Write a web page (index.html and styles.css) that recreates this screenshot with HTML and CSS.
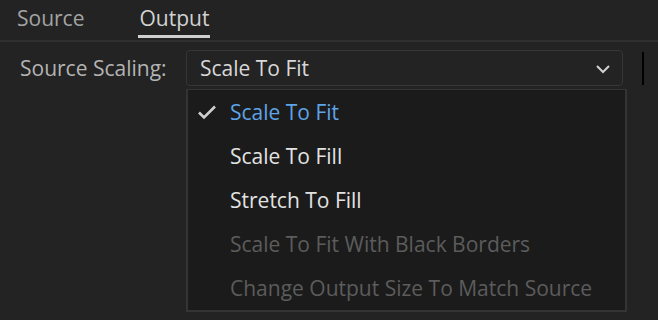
FILE: index.html
```html
<!DOCTYPE html>
<html lang="en">
<head>
  <meta charset="UTF-8">
  <meta name="viewport" content="width=device-width, initial-scale=1.0">
  <title>Output</title>
  <link rel="stylesheet" href="styles.css">
</head>
<body>
  <div class="panel">
    <div class="tab-header">
      <span class="tab-item">Source</span>
      <span class="tab-item active">Output</span>
    </div>
    <div class="field">
      <span class="field-label">Source Scaling:</span>
      <div class="select">
        <span class="select-value">Scale To Fit</span>
        <svg class="chevron" width="16" height="10" viewBox="0 0 16 10">
          <path d="M2 2 L8 8 L14 2" fill="none" stroke="#d0d0d0" stroke-width="2"/>
        </svg>
      </div>
      <span class="divider"></span>
      <ul class="menu">
        <li class="menu-item checked">
          <svg class="check" width="20" height="16" viewBox="0 0 20 16">
            <path d="M2 8.5 L7 13.5 L18 2.5" fill="none" stroke="#cfcfcf" stroke-width="2.6"/>
          </svg>
          Scale To Fit
        </li>
        <li class="menu-item">Scale To Fill</li>
        <li class="menu-item">Stretch To Fill</li>
        <li class="menu-item disabled">Scale To Fit With Black Borders</li>
        <li class="menu-item disabled">Change Output Size To Match Source</li>
      </ul>
    </div>
  </div>
</body>
</html>
```

FILE: styles.css
```css
html, body{
  height: 100%;
}

body{
  margin: 0;
  background: #232323;
  font-family: "Open Sans", Lato, sans-serif;
}

.panel{
  min-height: 320px;
}

.tab-header{
  display: flex;
  gap: 55px;
  height: 42px;
  padding-left: 17px;
  border-bottom: 2px solid #2f2f2f;
  box-sizing: border-box;
  font-size: 21px;
}

.tab-item{
  position: relative;
  line-height: 36px;
  color: #a3a3a3;
}

.tab-item.active{
  color: #d2d2d2;
}

.tab-item.active::after{
  content: '';
  position: absolute;
  left: -1px;
  right: -1px;
  top: 35px;
  height: 3px;
  background: #cfcfcf;
}

.field{
  position: relative;
  display: flex;
  align-items: center;
  padding: 8px 0 0 20px;
}

.field-label{
  width: 166px;
  font-size: 21px;
  color: #b4b4b4;
}

.select{
  display: flex;
  align-items: center;
  justify-content: space-between;
  width: 437px;
  height: 36px;
  padding: 0 11px 0 13px;
  box-sizing: border-box;
  border: 1px solid #363636;
  border-radius: 4px;
  font-size: 21px;
  color: #d8d8d8;
}

.chevron{
  margin-top: 2px;
}

.divider{
  width: 2px;
  height: 33px;
  margin-left: 19px;
  background: #000;
}

.menu{
  position: absolute;
  left: 186px;
  top: 47px;
  width: 441px;
  margin: 0;
  padding: 0;
  list-style: none;
  box-sizing: border-box;
  background: #1b1b1b;
  border: 2px solid #343434;
  border-top-width: 1px;
  z-index: 2;
}

.menu-item{
  position: relative;
  height: 44px;
  line-height: 44px;
  padding-left: 42px;
  font-size: 21px;
  color: #e2e2e2;
}

.menu-item.checked{
  color: #5ea4e8;
}

.menu-item.disabled{
  color: #5c5c5c;
}

.check{
  position: absolute;
  left: 9px;
  top: 14px;
}
```
